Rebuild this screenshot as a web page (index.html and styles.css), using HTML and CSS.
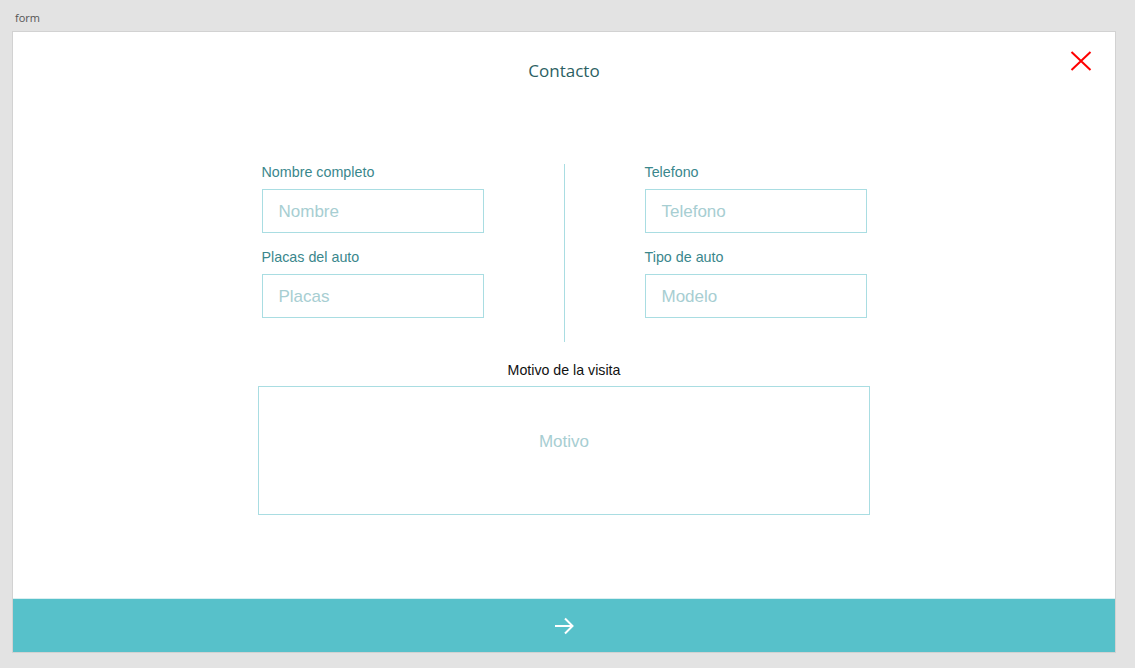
FILE: index.html
```html
<!DOCTYPE html>
<html lang="es">
<head>
<meta charset="utf-8">
<title>form</title>
<link rel="stylesheet" href="styles.css">
</head>
<body>
<div class="frame-label">form</div>
<div class="panel">
  <button class="close" aria-label="Cerrar">
    <svg width="22" height="20" viewBox="0 0 22 20"><path d="M1.5 1 L20.5 19 M20.5 1 L1.5 19" stroke="#ff0000" stroke-width="2" fill="none"/></svg>
  </button>
  <div class="content">
    <h1 class="title">Contacto</h1>
    <div class="fields">
      <div class="col">
        <label class="label">Nombre completo</label>
        <div class="input">Nombre</div>
        <label class="label second">Placas del auto</label>
        <div class="input">Placas</div>
      </div>
      <div class="divider"></div>
      <div class="col">
        <label class="label">Telefono</label>
        <div class="input">Telefono</div>
        <label class="label second">Tipo de auto</label>
        <div class="input">Modelo</div>
      </div>
    </div>
    <div class="motivo-label">Motivo de la visita</div>
    <div class="textarea">Motivo</div>
  </div>
  <div class="submit">
    <svg width="22" height="20" viewBox="0 0 22 20"><path d="M2 10 H19.5 M12 2.5 L19.5 10 L12 17.5" stroke="#ffffff" stroke-width="2" fill="none"/></svg>
  </div>
</div>
</body>
</html>
```
FILE: styles.css
```css
html, body {
  margin: 0;
  padding: 0;
}
body {
  background: #e3e3e3;
  font-family: "Liberation Sans", Arial, sans-serif;
  width: 1135px;
  height: 668px;
  overflow: hidden;
}
.frame-label {
  font-family: "Open Sans", "Liberation Sans", sans-serif;
  font-size: 11px;
  color: #555555;
  line-height: 15px;
  padding: 10px 0 0 15px;
  height: 21px;
}
.panel {
  position: relative;
  margin-left: 12px;
  width: 1102px;
  height: 620px;
  background: #ffffff;
  border: 1px solid #d2d2d2;
  display: flex;
  flex-direction: column;
}
.close {
  position: absolute;
  top: 19px;
  right: 23px;
  padding: 0;
  margin: 0;
  border: 0;
  background: none;
  width: 22px;
  height: 20px;
  display: block;
}
.close svg { display: block; }
.content {
  flex: 1;
  display: flex;
  flex-direction: column;
  align-items: center;
}
.title {
  margin: 27px 0 0 0;
  font-family: "Open Sans", "Noto Sans", sans-serif;
  font-weight: 400;
  font-size: 17px;
  line-height: 24px;
  color: #2c5f63;
}
.fields {
  margin-top: 81px;
  display: flex;
  gap: 80px;
  width: 605px;
}
.col {
  width: 222px;
  display: flex;
  flex-direction: column;
}
.divider {
  width: 1px;
  height: 178px;
  background: #a9dde2;
}
.label {
  font-size: 14.3px;
  line-height: 17px;
  color: #3a878c;
  margin-bottom: 8px;
}
.label.second {
  margin-top: 16px;
}
.input {
  box-sizing: border-box;
  height: 44px;
  border: 1px solid #a9dde2;
  padding-left: 16px;
  padding-top: 1px;
  font-size: 17px;
  line-height: 42px;
  color: #a7ced2;
  overflow: hidden;
}
.motivo-label {
  margin-top: 20px;
  font-size: 14.2px;
  line-height: 17px;
  color: #111111;
}
.textarea {
  box-sizing: border-box;
  margin-top: 7px;
  width: 612px;
  height: 129px;
  border: 1px solid #a9dde2;
  font-size: 17px;
  color: #a7ced2;
  text-align: center;
  padding-top: 44px;
  line-height: 22px;
}
.submit {
  flex: none;
  height: 53px;
  border-top: 1px solid #d9eff1;
  background: #57c1ca;
  display: flex;
  align-items: center;
  justify-content: center;
}
.submit svg { display: block; }
```
